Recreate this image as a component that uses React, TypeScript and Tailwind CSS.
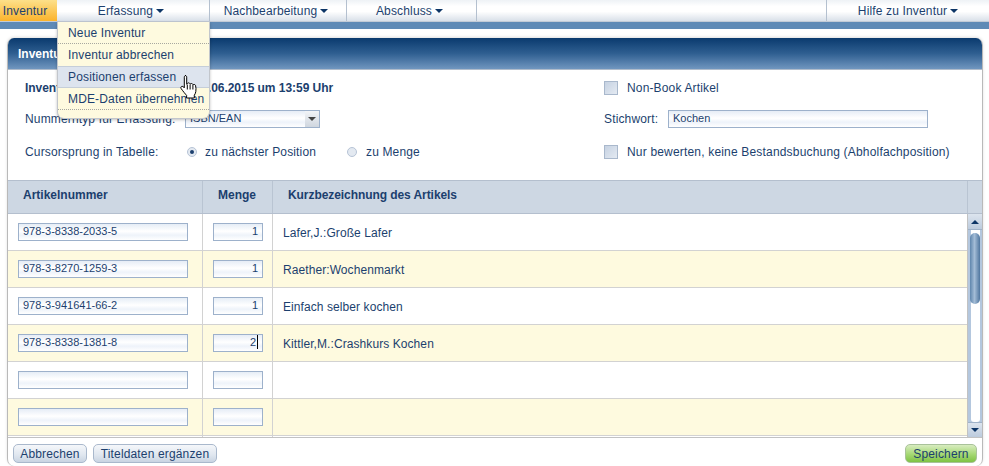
import { FC, ReactNode } from 'react'

const rows = [
  { nr: '978-3-8338-2033-5', menge: '1', titel: 'Lafer,J.:Große Lafer' },
  { nr: '978-3-8270-1259-3', menge: '1', titel: 'Raether:Wochenmarkt' },
  { nr: '978-3-941641-66-2', menge: '1', titel: 'Einfach selber kochen' },
  { nr: '978-3-8338-1381-8', menge: '2', titel: 'Kittler,M.:Crashkurs Kochen', focus: true },
  { nr: '', menge: '', titel: '' },
  { nr: '', menge: '', titel: '' },
]

const inputBg = 'border border-[#9db1cb] bg-[linear-gradient(#e6edf6,#ffffff_45%,#eef3fa_70%,#ffffff)]'

const Caret = () => (
  <span className="ml-[3px] inline-block h-0 w-0 border-x-[4px] border-t-[4px] border-x-transparent border-t-[#0c3566] align-middle" />
)

const NavItem: FC<{ label: string; className: string }> = ({ label, className }) => (
  <div className={`flex h-full items-center justify-center border-r border-[#b4c0cf] pr-[4px] ${className}`}>
    {label}
    <Caret />
  </div>
)

const Field: FC<{ value?: string; className: string; right?: boolean; focus?: boolean }> = ({
  value,
  className,
  right,
  focus,
}) => (
  <div
    className={`flex h-[18px] items-center px-[4px] pb-[2px] text-[11px] tracking-normal ${inputBg} ${right ? 'justify-end' : ''} ${className}`}
  >
    {value}
    {focus && <span className="ml-px h-[14px] w-px bg-black" />}
  </div>
)

const Checkbox = () => (
  <span className="h-[14px] w-[14px] shrink-0 border border-[#a9b8cc] bg-[linear-gradient(135deg,#c6d2e2,#e4eaf2)]" />
)

const Radio: FC<{ on?: boolean }> = ({ on }) => (
  <span className="flex h-[10px] w-[10px] shrink-0 items-center justify-center rounded-full border border-[#b7c4d6] bg-[#e3e9f1]">
    {on && <span className="h-[4px] w-[4px] rounded-full bg-[#1c3f6e]" />}
  </span>
)

const Btn: FC<{ children: ReactNode; className: string }> = ({ children, className }) => (
  <div
    className={`flex h-[19px] items-center justify-center rounded-[5px] border border-[#a9b8cc] bg-[linear-gradient(#f5f7fa,#dfe6ef_60%,#c9d4e2)] ${className}`}
  >
    {children}
  </div>
)

const Hand = () => (
  <svg width="22" height="26" viewBox="0 0 22 26" className="absolute left-[179px] top-[74px]">
    <path
      d="M6 1.5c1 0 1.7.7 1.7 1.7v7l.6-.6c.3-1 2.2-1 2.6 0l.3.6c.4-.9 2.2-.9 2.6.1l.2.6c.5-.7 2.2-.6 2.5.5.5 1.700.7 4 .3 6.300-.3 1.600-.9 2.700-1.500 3.500v2.800H7.600v-2.600c-1.300-1.400-3.400-4-5.400-6.700-.7-1-.3-2 .6-2.300.7-.2 1.400.1 2 .8l.5.6V3.200c0-1 .7-1.700 1.700-1.700z"
      fill="#fff"
      stroke="#000"
      strokeWidth="1"
    />
    <path d="M8.300 10.500v5M11.100 10.500v5M13.900 11v4.500" stroke="#000" strokeWidth="1" fill="none" />
  </svg>
)

const menu = ['Neue Inventur', 'Inventur abbrechen', 'Positionen erfassen', 'MDE-Daten übernehmen']

const App = () => {
  return (
    <div className="relative h-[466px] w-[989px] overflow-hidden bg-white font-['Liberation_Sans',Arial,sans-serif] text-[12px] tracking-[0.15px] text-[#1c3f6e]">
      {/* top nav */}
      <div className="flex h-[22px] border-b border-[#c3cbd6] bg-[linear-gradient(#eef2f6,#ffffff_30%,#ffffff_55%,#d9e0e9)]">
        <div className="flex h-full w-[57px] items-center justify-center bg-[linear-gradient(#fde08a,#fbb32c)] pr-[7px]">
          Inventur
        </div>
        <NavItem label="Erfassung" className="w-[153px]" />
        <NavItem label="Nachbearbeitung" className="w-[137px]" />
        <NavItem label="Abschluss" className="w-[130px]" />
        <div className="flex-1 border-r border-[#b4c0cf]" />
        <div className="flex h-full w-[162px] items-center justify-center">
          Hilfe zu Inventur
          <Caret />
        </div>
      </div>
      <div className="h-[7px] bg-[#5f8ab6]" />

      {/* panel */}
      <div className="mx-[7px] mt-[9px] h-[428px] w-[976px] overflow-hidden rounded-[7px] border-x border-[#b9b9b9] shadow-[0_-1px_3px_rgba(0,0,0,0.12)]">
        <div className="flex h-[31px] items-center bg-[linear-gradient(#0a3a6e,#2f5f91_50%,#7096bf)] pl-[10px] font-bold tracking-normal text-white">
          Inventur
        </div>

        <div className="flex h-[111px] border-t border-[#b0bccb]">
          <div className="w-[596px] pl-[17px]">
            <div className="mt-[9px] h-[18px] font-bold tracking-[-0.04px]">Inventur wurde begonnen am 17.06.2015 um 13:59 Uhr</div>
            <div className="mt-[13px] flex h-[18px] items-center">
              <span className="w-[160px]">Nummerntyp für Erfassung:</span>
              <div className="flex h-[18px] w-[135px] items-center border border-[#9db1cb] bg-[linear-gradient(#e6edf6,#ffffff_45%,#eef3fa_70%,#ffffff)] pl-[4px] text-[11px] tracking-normal">
                <span className="flex-1 pb-[2px]">ISBN/EAN</span>
                <span className="flex h-full w-[14px] items-center justify-center bg-[linear-gradient(#f2f4f7,#cfd6df)]">
                  <span className="h-0 w-0 border-x-[4px] border-t-[4px] border-x-transparent border-t-[#444]" />
                </span>
              </div>
            </div>
            <div className="mt-[15px] flex h-[18px] items-center">
              <span className="w-[162px]">Cursorsprung in Tabelle:</span>
              <Radio on />
              <span className="ml-[8px] w-[142px]">zu nächster Position</span>
              <Radio />
              <span className="ml-[9px]">zu Menge</span>
            </div>
          </div>
          <div className="flex-1">
            <div className="mt-[9px] flex h-[18px] items-center gap-[9px]">
              <Checkbox />
              <span>Non-Book Artikel</span>
            </div>
            <div className="mt-[13px] flex h-[18px] items-center">
              <span className="w-[64px]">Stichwort:</span>
              <Field value="Kochen" className="w-[260px]" />
            </div>
            <div className="mt-[15px] flex h-[18px] items-center gap-[9px]">
              <Checkbox />
              <span className="tracking-[0.18px]">Nur bewerten, keine Bestandsbuchung (Abholfachposition)</span>
            </div>
          </div>
        </div>

        {/* table head */}
        <div className="flex h-[34px] border-y border-[#b4bfce] bg-[#cdd7e3] font-bold tracking-normal">
          <div className="w-[195px] border-r border-[#b9c4d2] pl-[15px] pt-[5px]">Artikelnummer</div>
          <div className="w-[70px] border-r border-[#b9c4d2] pl-[15px] pt-[5px]">Menge</div>
          <div className="flex-1 border-r border-[#b9c4d2] pl-[15px] pt-[5px] tracking-[-0.07px]">Kurzbezeichnung des Artikels</div>
          <div className="w-[14px]" />
        </div>

        {/* table body */}
        <div className="flex h-[224px] border-b border-[#c2c2c2]">
          <div className="flex-1 overflow-hidden">
            {rows.map((r, i) => (
              <div
                key={i}
                className={`flex h-[37px] border-b border-[#d2d2d2] ${i % 2 ? 'bg-[#fefadf]' : 'bg-white'}`}
              >
                <div className="flex w-[195px] items-start border-r border-[#d2d2d2] pl-[10px] pt-[9px]">
                  <Field value={r.nr} className="w-[170px]" />
                </div>
                <div className="flex w-[70px] items-start border-r border-[#d2d2d2] pl-[10px] pt-[9px]">
                  <Field value={r.menge} className="w-[50px]" right focus={r.focus} />
                </div>
                <div className="flex flex-1 items-center pl-[10px] pt-px tracking-[0.08px]">{r.titel}</div>
              </div>
            ))}
            <div className="flex h-[3px]">
              <div className="w-[195px] border-r border-[#d2d2d2]" />
              <div className="w-[70px] border-r border-[#d2d2d2]" />
            </div>
          </div>
          {/* scrollbar */}
          <div className="flex w-[15px] flex-col border-l border-[#c2c2c2] bg-[#b4c7de]">
            <div className="flex h-[16px] items-center justify-center border-b border-[#9fb2c9] bg-[linear-gradient(#dce4ee,#bccbdd)]">
              <span className="h-0 w-0 border-x-[4px] border-b-[4px] border-x-transparent border-b-[#0c3566]" />
            </div>
            <div className="ml-[3px] mr-[2px] flex-1 rounded-b-[3px] bg-white">
              <div className="-ml-px mt-[3px] h-[71px] w-[10px] rounded-[5px] bg-[linear-gradient(90deg,#5f86ad,#a3bcd6_45%,#4f769f)]" />
            </div>
            <div className="flex h-[15px] items-center justify-center border-t border-[#9fb2c9] bg-[linear-gradient(#dce4ee,#bccbdd)]">
              <span className="h-0 w-0 border-x-[4px] border-t-[4px] border-x-transparent border-t-[#0c3566]" />
            </div>
          </div>
        </div>

        {/* footer */}
        <div className="flex h-[27px] items-start gap-[6px] pl-[5px] pr-[5px] pt-[6px]">
          <Btn className="w-[74px]">Abbrechen</Btn>
          <Btn className="w-[124px]">Titeldaten ergänzen</Btn>
          <div className="flex-1" />
          <div className="flex h-[19px] w-[72px] items-center justify-center rounded-[5px] border border-[#a9c29a] bg-[linear-gradient(#d8ecc0,#a5d873_55%,#7fc244)]">
            Speichern
          </div>
        </div>
      </div>

      {/* open dropdown */}
      <div className="absolute left-[57px] top-[22px] h-[97px] w-[153px] rounded-b-[7px] border border-t-0 border-[#c2c6cc] bg-[#fefadf] shadow-[0_1px_3px_rgba(0,0,0,0.25)]">
        {menu.map((m, i) => (
          <div
            key={m}
            className={`flex h-[22px] items-center pl-[10px] ${
              i === 2
                ? 'border-y border-[#c5ced9] bg-[#dde4ee]'
                : i === 1
                  ? ''
                  : 'border-b border-dotted border-[#a8a8a0]'
            }`}
          >
            {m}
          </div>
        ))}
      </div>
      <Hand />
    </div>
  )
}

export default App
